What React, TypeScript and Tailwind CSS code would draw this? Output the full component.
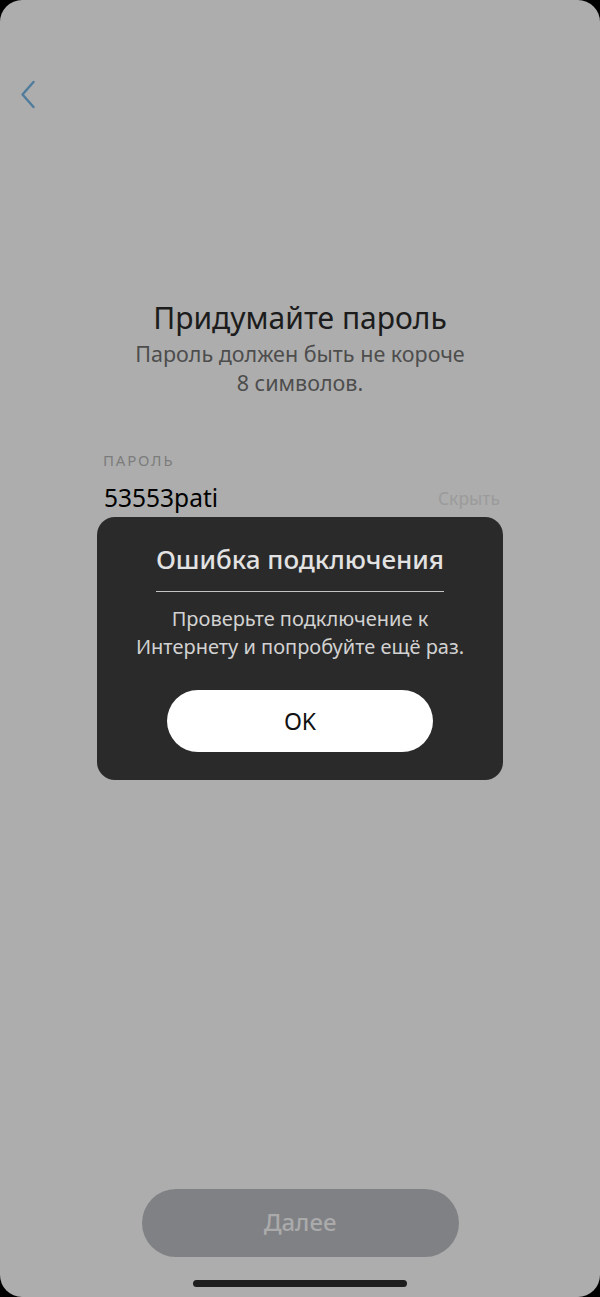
import React from 'react';

const font = { fontFamily: '"Noto Sans", "Open Sans", sans-serif' };

function BackIcon() {
  return (
    <svg width="16" height="29" viewBox="0 0 16 29" fill="none">
      <path d="M13.5 2 L2.5 14.5 L13.5 27" stroke="#4f7c9c" strokeWidth="2.4" strokeLinecap="round" strokeLinejoin="round" />
    </svg>
  );
}

function ErrorDialog() {
  return (
    <div className="absolute left-[97px] top-[517px] w-[406px] rounded-[18px] bg-[#2a2a2a] px-[30px] pt-[25px] pb-[28px] flex flex-col items-center">
      <div className="text-[26px] leading-[34px] font-medium text-[#e2e2e2] whitespace-nowrap">Ошибка подключения</div>
      <div className="mt-[15px] h-px w-[288px] bg-[#c4c4c4]" />
      <div className="mt-[13px] text-[20px] leading-[28px] text-[#d2d2d2] text-center whitespace-nowrap">
        Проверьте подключение к
        <br />
        Интернету и попробуйте ещё раз.
      </div>
      <button className="mt-[29px] h-[62px] w-[266px] rounded-full bg-white text-[23px] text-[#111] flex items-center justify-center">
        OK
      </button>
    </div>
  );
}

export default function App() {
  return (
    <div className="w-[600px] h-[1297px] bg-black" style={font}>
      <div className="relative h-full rounded-[22px] bg-[#adadad] flex flex-col">
        <div className="pt-[80px] pl-[20px]">
          <BackIcon />
        </div>

        <div className="mt-[189px] flex flex-col items-center">
          <h1 className="text-[30px] leading-[40px] text-[#1c1c1c]">Придумайте пароль</h1>
          <p className="mt-[1px] text-[21.5px] leading-[29px] text-[#4d4d4d] text-center">
            Пароль должен быть не короче
            <br />8 символов.
          </p>
        </div>

        <div className="mt-[53px] px-[100px]">
          <div className="pl-[3px] text-[15px] leading-[20px] tracking-[0.12em] text-[#7c7c7c]">ПАРОЛЬ</div>
          <div className="mt-[12px] flex items-end justify-between">
            <span className="pl-[4px] text-[24.5px] leading-[32px] text-black">53553pati</span>
            <span className="pb-[5px] text-[17.5px] leading-[22px] text-[#9b9b9b]">Скрыть</span>
          </div>
        </div>

        <div className="mt-auto flex flex-col items-center pb-[10px]">
          <button className="h-[68px] w-[317px] rounded-full bg-[#808185] pb-[3px] text-[24px] font-medium text-[#aaaaab]">
            Далее
          </button>
          <div className="mt-[23px] h-[7px] w-[214px] rounded-full bg-[#1e1e1e]" />
        </div>

        <ErrorDialog />
      </div>
    </div>
  );
}
